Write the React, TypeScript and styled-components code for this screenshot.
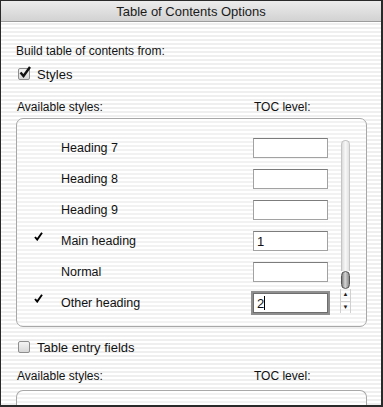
import styled, { createGlobalStyle } from "styled-components";

const GlobalStyle = createGlobalStyle`
  html, body {
    margin: 0;
    padding: 0;
    background: #fff;
  }
  #root {
    width: 383px;
    height: 407px;
    overflow: hidden;
  }
`;

type Row = { name: string; checked?: boolean; level?: string; focused?: boolean };

const rows: Row[] = [
  { name: "Heading 7" },
  { name: "Heading 8" },
  { name: "Heading 9" },
  { name: "Main heading", checked: true, level: "1" },
  { name: "Normal" },
  { name: "Other heading", checked: true, level: "2", focused: true },
];

const Tick = () => (
  <svg width="9" height="9" viewBox="0 0 9 9">
    <path d="M1 5 L3.2 7.6 L8 0.8" fill="none" stroke="#000" strokeWidth="1.9" />
  </svg>
);

const CheckBox: React.FC<{ checked?: boolean }> = ({ checked }) => (
  <Box>
    {checked && (
      <svg width="14" height="13" viewBox="0 0 14 13">
        <path d="M2.5 6.5 L5.5 10 L12 1" fill="none" stroke="#111" strokeWidth="2.4" />
      </svg>
    )}
  </Box>
);

export default function App() {
  return (
    <>
      <GlobalStyle />
      <Window>
        <TitleBar>Table of Contents Options</TitleBar>
        <Content>
          <Caption>Build table of contents from:</Caption>
          <CheckRow $top={9}>
            <CheckBox checked />
            <span>Styles</span>
          </CheckRow>
          <HeaderRow $top={19}>
            <span>Available styles:</span>
            <span>TOC level:</span>
          </HeaderRow>
          <Group $top={4}>
            <List>
              {rows.map((r) => (
                <StyleRow key={r.name}>
                  <Mark>{r.checked && <Tick />}</Mark>
                  <StyleName>{r.name}</StyleName>
                  <Level $focused={r.focused}>
                    {r.level}
                    {r.focused && <Caret />}
                  </Level>
                </StyleRow>
              ))}
            </List>
            <Scroller>
              <Track />
              <Thumb />
              <Arrow>▲</Arrow>
              <Arrow>▼</Arrow>
            </Scroller>
          </Group>
          <CheckRow $top={13}>
            <CheckBox />
            <span>Table entry fields</span>
          </CheckRow>
          <HeaderRow $top={15}>
            <span>Available styles:</span>
            <span>TOC level:</span>
          </HeaderRow>
          <Group $top={7} $open />
        </Content>
      </Window>
    </>
  );
}

const Window = styled.div`
  box-sizing: border-box;
  width: 383px;
  height: 407px;
  border: 1px solid #2a2a2a;
  border-right-width: 2px;
  border-bottom-width: 2px;
  display: flex;
  flex-direction: column;
  overflow: hidden;
  font-family: "Liberation Sans", Arial, sans-serif;
  font-size: 12px;
  color: #111;
  background: repeating-linear-gradient(
    to bottom,
    #ffffff 0px,
    #ffffff 2px,
    #efefef 2px,
    #efefef 4px
  );
`;

const TitleBar = styled.div`
  height: 20px;
  flex: none;
  display: flex;
  align-items: center;
  justify-content: center;
  font-size: 13px;
  color: #1a1a1a;
  background: linear-gradient(to bottom, #ececec, #d2d2d2);
  border-bottom: 1px solid #9c9c9c;
`;

const Content = styled.div`
  display: flex;
  flex-direction: column;
  padding: 0 14px 0 15px;
`;

const Caption = styled.div`
  margin-top: 22px;
  line-height: 14px;
`;

const CheckRow = styled.div<{ $top: number }>`
  display: flex;
  align-items: center;
  gap: 7px;
  margin-top: ${(p) => p.$top}px;
  padding-left: 2px;
  height: 14px;
  font-size: 13px;
`;

const Box = styled.div`
  box-sizing: border-box;
  width: 12px;
  height: 12px;
  border: 1px solid #8e8e8e;
  border-radius: 2px;
  background: linear-gradient(to bottom, #f4f4f4, #d8d8d8);
  position: relative;
  svg {
    position: absolute;
    left: -1px;
    top: -3px;
  }
`;

const HeaderRow = styled.div<{ $top: number }>`
  display: flex;
  margin-top: ${(p) => p.$top}px;
  padding-left: 1px;
  line-height: 14px;
  span:first-child {
    width: 237px;
  }
`;

const Group = styled.div<{ $top: number; $open?: boolean }>`
  margin-top: ${(p) => p.$top}px;
  display: flex;
  gap: 12px;
  border: 1px solid #a8a8a8;
  border-radius: 7px;
  padding: 19px 15px 13px 17px;
  ${(p) => p.$open && "height: 40px; border-bottom: none; border-radius: 7px 7px 0 0;"}
  background: repeating-linear-gradient(
    to bottom,
    #ffffff 0px,
    #ffffff 2px,
    #f2f2f2 2px,
    #f2f2f2 4px
  );
`;

const List = styled.div`
  flex: 1;
  display: flex;
  flex-direction: column;
  gap: 11px;
`;

const StyleRow = styled.div`
  display: flex;
  align-items: center;
  height: 20px;
`;

const Mark = styled.div`
  width: 27px;
  height: 20px;
  display: flex;
  align-items: flex-start;
  padding-top: 1px;
  box-sizing: border-box;
`;

const StyleName = styled.div`
  flex: 1;
  font-size: 12.5px;
`;

const Level = styled.div<{ $focused?: boolean }>`
  box-sizing: border-box;
  width: 75px;
  height: 20px;
  border: 1px solid #a2a2a2;
  border-top-color: #7c7c7c;
  background: #fff;
  display: flex;
  align-items: center;
  padding-left: 3px;
  font-size: 13px;
  ${(p) => p.$focused && "box-shadow: 0 0 0 2px #8f8f8f; border-color: #6d6d6d;"}
`;

const Caret = styled.span`
  width: 1px;
  height: 14px;
  background: #000;
`;

const Scroller = styled.div`
  width: 11px;
  display: flex;
  flex-direction: column;
  align-items: center;
  margin-top: -2px;
`;

const Track = styled.div`
  box-sizing: border-box;
  width: 9px;
  flex: 1;
  margin-top: 4px;
  border: 1px solid #c4c4c4;
  border-bottom: none;
  border-radius: 5px 5px 0 0;
  background: linear-gradient(to right, #dcdcdc, #f7f7f7 50%, #e2e2e2);
`;

const Thumb = styled.div`
  box-sizing: border-box;
  width: 9px;
  height: 18px;
  border: 1px solid #555;
  border-radius: 5px;
  background: linear-gradient(to right, #7e7e7e, #d6d6d6 45%, #8a8a8a);
`;

const Arrow = styled.div`
  box-sizing: border-box;
  width: 11px;
  height: 12px;
  font-size: 6px;
  line-height: 11px;
  text-align: center;
  color: #222;
  border-left: 1px solid #d0d0d0;
  border-right: 1px solid #d0d0d0;
  & + & {
    border-top: 1px solid #d0d0d0;
  }
`;
